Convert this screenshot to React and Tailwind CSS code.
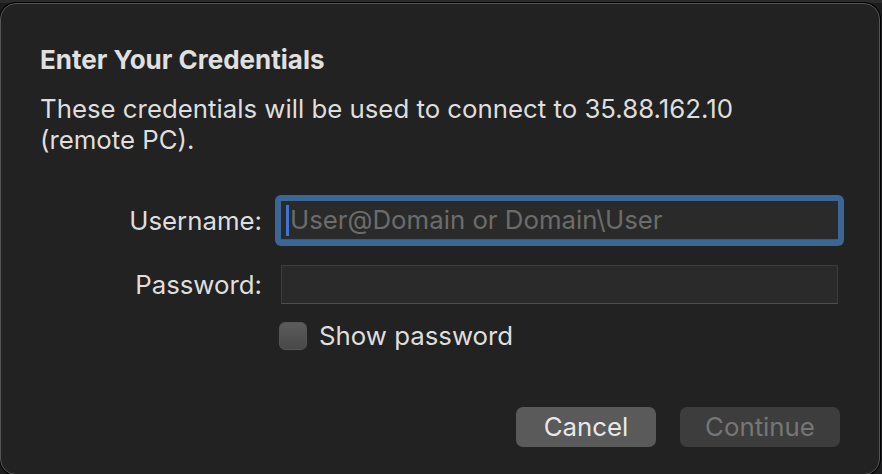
export default function App() {
  return (
    <div
      className="h-screen w-full overflow-hidden bg-[#1d1d1f]"
      style={{ fontFamily: 'Inter, "Noto Sans", sans-serif' }}
    >
      <div className="h-[3px] w-full bg-[#2b2b2b]" />
      <div className="w-[880px] h-[472px] rounded-[16px] border border-[#555] bg-[#222222] shadow-[0_0_0_1px_#000] flex flex-col text-[25.8px] leading-[30px] text-[#dedede]">
        {/* Header */}
        <div className="pl-[39px] pr-[39px] pt-[41px]">
          <h1 className="font-bold text-[26px] text-[#e0e0e0]">Enter Your Credentials</h1>
          <p className="mt-[18px] leading-[31px]">
            These credentials will be used to connect to 35.88.162.10
            <br />
            (remote PC).
          </p>
        </div>

        {/* Form */}
        <div className="mt-[46px] pl-[39px] grid grid-cols-[222px_557px] gap-x-[19px] items-center">
          <label className="text-right">Username:</label>
          <div className="-m-[6px] p-[6px] rounded-[6px] bg-[#3b6797]">
            <div className="h-[39px] bg-[#2a2a2a] border-b border-[#555] flex items-center pl-[5px]">
              <span className="w-[3px] h-[31px] bg-[#3f74d6] mr-px" />
              <span className="text-[#6c6c6c]">User@Domain or Domain\User</span>
            </div>
          </div>

          <label className="text-right mt-[25px]">Password:</label>
          <div className="mt-[25px] h-[39px] bg-[#2a2a2a] border border-[#3c3c3c] border-b-[#4e4e4e]" />

          <div />
          <div className="mt-[17px] flex items-center gap-[12px] -ml-[2px]">
            <span className="w-[28px] h-[28px] rounded-[6px] bg-gradient-to-b from-[#5c5c5c] to-[#484848] border border-[#555]" />
            <span>Show password</span>
          </div>
        </div>

        {/* Buttons */}
        <div className="mt-auto mb-[27px] pr-[39px] flex justify-end gap-[24px]">
          <button className="w-[140px] h-[40px] rounded-[7px] bg-[#5a5a5a] text-[#e8e8e8] leading-[40px]">
            Cancel
          </button>
          <button className="w-[160px] h-[40px] rounded-[7px] bg-[#3d3d3d] text-[#767676] leading-[40px]">
            Continue
          </button>
        </div>
      </div>
    </div>
  );
}
